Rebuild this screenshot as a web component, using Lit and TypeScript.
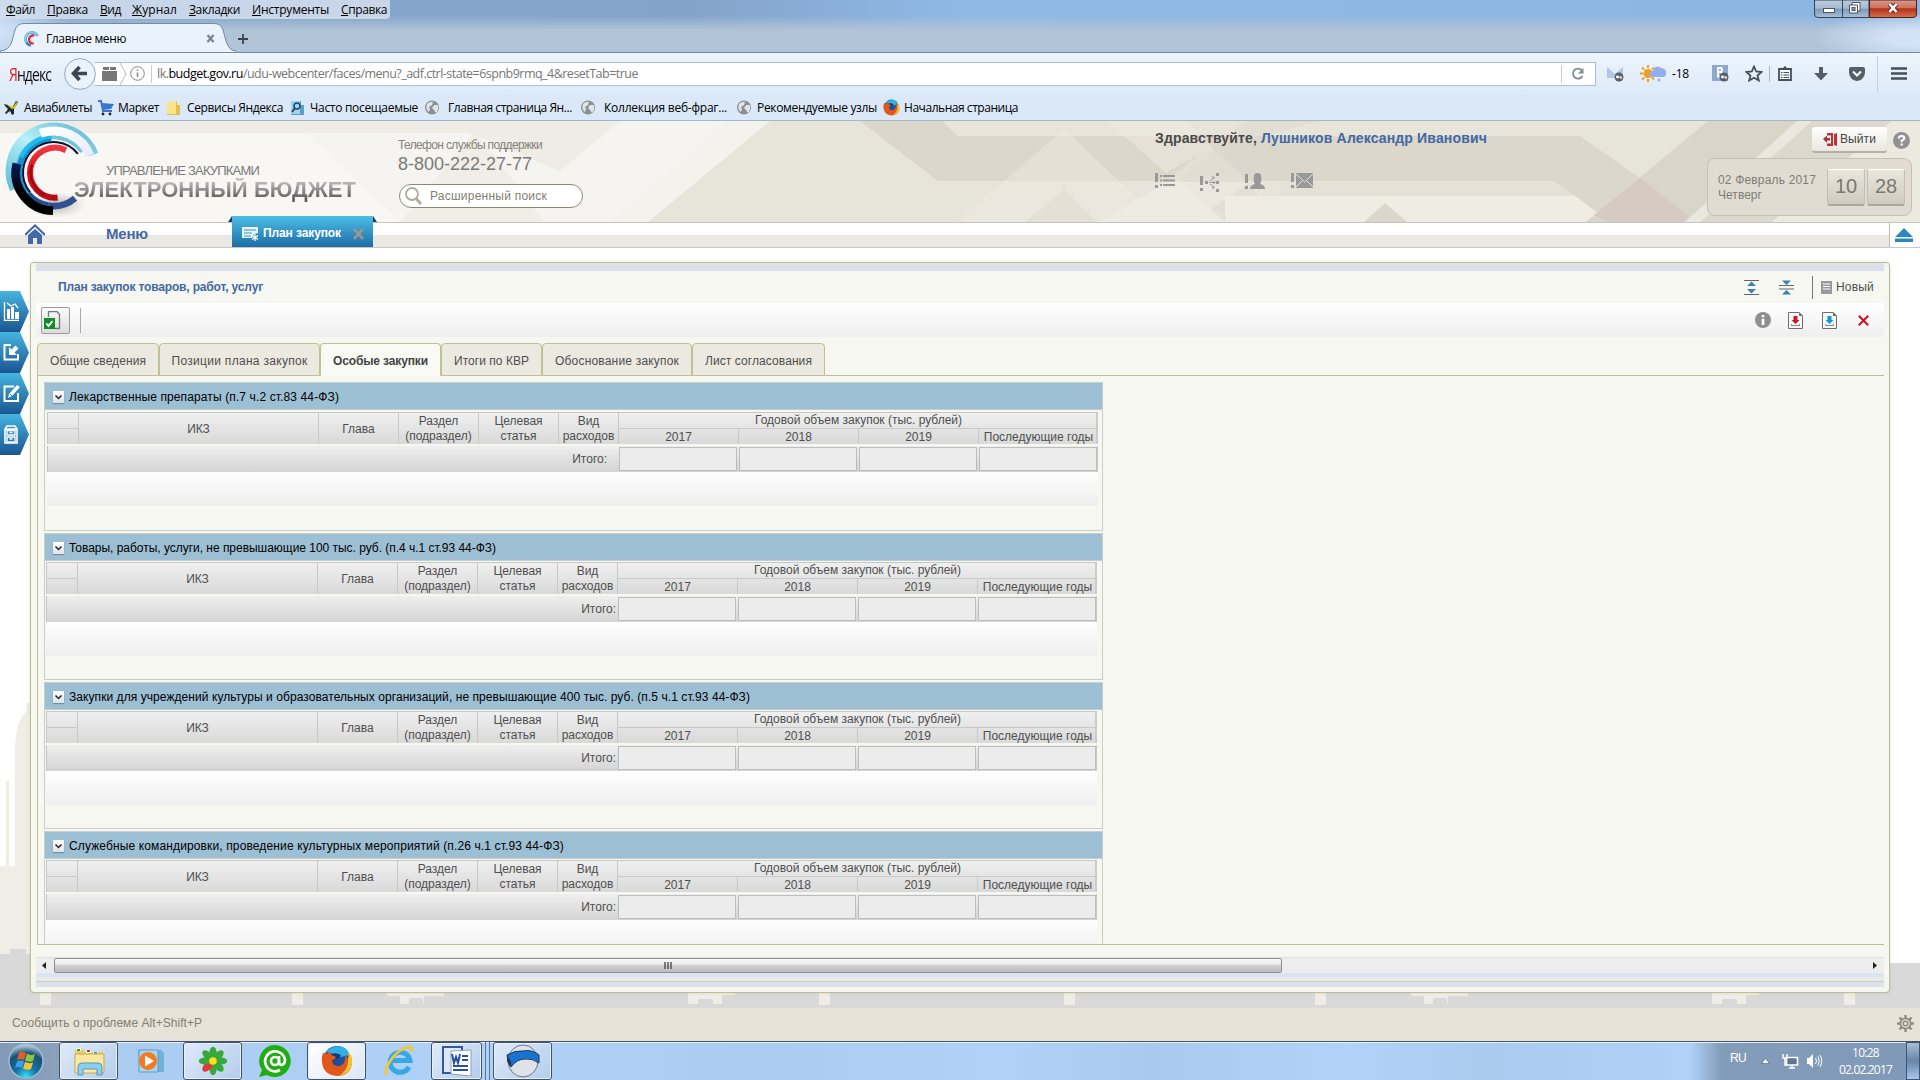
import { LitElement, html, svg, css } from "lit";
import { customElement, property } from "lit/decorators.js";

/** A text run that is tracked in or out so that it fills a set width. */
@customElement("fit-text")
class FitText extends LitElement {
  @property({ type: Number }) w = 0;
  @property({ type: Number }) gap = 0;
  static styles = css`
    :host { display: inline-block; white-space: nowrap; flex: none; }
    span { display: inline-block; }
  `;
  render() {
    return html`<span><slot></slot></span>`;
  }
  firstUpdated() {
    const span = this.renderRoot.querySelector("span") as HTMLElement;
    const n = (this.textContent || "").trim().length;
    const natural = span.getBoundingClientRect().width;
    if (this.w && n) {
      span.style.letterSpacing = `${(this.w - natural) / n}px`;
      this.style.width = `${this.w}px`;
    }
    this.style.marginLeft = `${this.gap}px`;
  }
}

const icon = (w: number, h: number, gap: number, body: unknown, vb = `0 0 ${w} ${h}`) =>
  html`<svg class="ic" width=${w} height=${h} viewBox=${vb} preserveAspectRatio="none" style="margin-left:${gap}px">${body}</svg>`;
const t = (text: unknown, w: number, gap = 0, cls = "") =>
  html`<fit-text class=${cls} .w=${w} .gap=${gap}>${text}</fit-text>`;

const arc = (cx: number, cy: number, r: number, a0: number, a1: number) => {
  const p = (a: number) => `${cx + r * Math.cos((a * Math.PI) / 180)} ${cy + r * Math.sin((a * Math.PI) / 180)}`;
  return `M${p(a0)}A${r} ${r} 0 ${a1 - a0 > 180 ? 1 : 0} 1 ${p(a1)}`;
};

const logo = svg`
  <defs>
    <linearGradient id="l1" x1="0" y1="1" x2="1" y2="0"><stop offset="0" stop-color="#62bfd8"/><stop offset=".5" stop-color="#b4f1fa"/><stop offset="1" stop-color="#5fb4d4"/></linearGradient>
    <linearGradient id="l2" x1="0" y1="0" x2="0" y2="1"><stop offset="0" stop-color="#0a1d5c"/><stop offset=".6" stop-color="#000"/></linearGradient>
    <linearGradient id="l3" x1="0" y1="0" x2="1" y2="1"><stop offset="0" stop-color="#fff"/><stop offset="1" stop-color="#e8ecfa"/></linearGradient>
    <linearGradient id="l4" x1="0" y1="0" x2="0" y2="1"><stop offset="0" stop-color="#f03844"/><stop offset=".5" stop-color="#e00c12"/><stop offset="1" stop-color="#b40c1a"/></linearGradient>
    <radialGradient id="l5"><stop offset="0" stop-color="#777" stop-opacity=".55"/><stop offset="1" stop-color="#999" stop-opacity="0"/></radialGradient>
  </defs>
  <ellipse cx="165" cy="255" rx="90" ry="38" fill="url(#l5)"/>
  <g fill="none">
    <path d=${arc(158, 152, 129, 155, 338)} stroke="url(#l1)" stroke-width="30"/>
    <path d=${arc(158, 157, 108, 150, 324)} stroke="#74c4e0" stroke-width="18"/>
    <path d=${arc(158, 158, 104, 130, 266)} stroke="#1592cc" stroke-width="18"/>
    <path d=${arc(158, 158, 108, 205, 266)} stroke="#18bdf2" stroke-width="12"/>
    <path d=${arc(158, 158, 92, 140, 322)} stroke="#0b1036" stroke-width="6"/>
    <path d=${arc(158, 150, 117, 250, 338)} stroke="url(#l3)" stroke-width="27"/>
    <path d=${arc(158, 158, 100, 50, 100)} stroke="#34518f" stroke-width="20"/>
    <path d=${arc(158, 158, 97, 100, 140)} stroke="#1d4f8c" stroke-width="14"/>
    <path d=${arc(158, 158, 114, 91, 194)} stroke="url(#l2)" stroke-width="26"/>
    <path d=${arc(162, 158, 75, 84, 296)} stroke="url(#l4)" stroke-width="18"/>
    <path d=${arc(162, 158, 73, 115, 200)} stroke="#8e0712" stroke-width="5"/>
  </g>`;

const headerArt = html`<svg class="art" width="1920" height="101" viewBox="0 0 1920 101">
  <rect width="1920" height="101" fill="#e7e4d9"/>
  <path d="M0 0H770L648 101H0Z" fill="#f3f2ed"/>
  <path d="M0 0H725L610 101H0Z" fill="#f5f4f0"/>
  <path d="M0 0H620L560 50L470 12H0Z" fill="#ebe8df" opacity=".7"/>
  <path d="M0 12H305L400 101H0Z" fill="#f8f7f4"/>
  <path d="M475 10L400 101H545Z" fill="#eeebe3" opacity=".7"/>
  <path d="M860 0H942L958 15H1580L1640 57L1690 101H1610L1553 60H938Z" fill="#dbd7cb"/>
  <path d="M957 101L1064 8L1140 80L1210 25L1290 101Z" fill="#efece4" opacity=".45"/>
  <path d="M1025 101L1064 69L1097 101Z" fill="#e4e0d5"/>
  <path d="M1107 0H1187L1212 26L1166 52Z" fill="#efece4" opacity=".5"/>
  <path d="M1245 0L1180 60L1225 101H1280L1220 26L1320 0Z" fill="#dfdbd0" opacity=".6"/>
  <path d="M1166 61H1250L1210 89L1225 101H1100Z" fill="#f1efe8" opacity=".5"/>
  <path d="M1280 61H1553L1575 75H1280Z" fill="#e4e1d6"/>
  <path d="M1225 75H1575L1610 101H1225Z" fill="#efece4"/>
  <path d="M1364 101L1385 82L1407 101Z" fill="#dbd7cb"/>
  <path d="M1708 0H1797L1690 96L1680 101H1586Z" fill="#d9d5c9"/>
  <path d="M1640 57L1690 96L1682 101H1609L1594 94Z" fill="#d5cbc1"/>
  <path d="M1797 0H1812L1700 101H1686Z" fill="#eae7de"/>
  <path d="M1812 0H1892L1772 101H1700Z" fill="#dcd8cd"/>
  <path d="M1892 0H1920V101H1772Z" fill="#ece9e0"/>
</svg>`;

const skyline = html`<svg class="art" width="1920" height="760" viewBox="0 0 1920 760">
  <path d="M0 618H6V533H9V618H15V500Q16 472 26 464L27 455H30V760H0Z" fill="#f0ede6"/>
  <path d="M0 706H10V701H26V706H40V745H1880V715H1920V760H0Z" fill="#d9d9d9"/>
  <g fill="#f0ede6">
    ${[40, 292, 819, 1064, 1315, 1844].map((x) => svg`<rect x=${x} y="745" width="11" height="12"/>`)}
    <path d="M387 745H444V748H424V755H423V750H409V756H400V748H387Z"/>
    <path d="M1411 745H1468V748H1448V755H1447V750H1433V756H1424V748H1411Z"/>
    <path d="M688 745H735V747H722V756H713V751H698V756H688Z"/>
    <path d="M1712 745H1759V747H1746V756H1737V751H1722V756H1712Z"/>
  </g>
</svg>`;

const globe = svg`<circle cx="7" cy="7.5" r="7" fill="#8b8f92"/><path d="M2 4Q5 1 8 2L7 5L4 7L5 9L4 12Q0 9 2 4ZM9 5L13 5Q14 9 11 13L9 10L7 8Z" fill="#dfe5e9"/>`;
const firefox = (s: number) => html`<svg class="ic" width=${s} height=${s} viewBox="0 0 32 32">
  <circle cx="16" cy="14.5" r="13.5" fill="#1d4f9c"/><path d="M5 7Q12 -1 22 2Q28 5 28 10L20 12L12 9Z" fill="#2fb0e6"/>
  <path d="M10 9Q15 7 20 10L17 14L12 15Z" fill="#163a78"/>
  <path d="M2 8Q4 8 6 9Q8 7 10 7Q9 10 13 11Q16 12 14 14L11 15Q11 20 16 21Q20 22 23 18Q25 14 24 10Q27 12 27 15Q28 11 27 7Q31 11 31 18Q29 31 16 31Q2 30 1 17Q0 12 2 8Z" fill="#e2571a"/>
  <path d="M27 6Q32 12 31 18Q29 29 18 31Q27 25 27 16Q28 11 27 6Z" fill="#f8c32e"/></svg>`;

const menus = [["Ф", "айл", 29, 6], ["П", "равка", 41, 12], ["В", "ид", 21, 12], ["Ж", "урнал", 45, 11], ["З", "акладки", 51, 12], ["И", "нструменты", 77, 12], ["С", "правка", 46, 12]] as const;

const bookmarks = () => html`
  ${icon(15, 16, 4, svg`<path d="M0 4L4 5L8 8L12 1L14 2L10 9L10 14L8 15L6 11L2 14L1 13L4 9L1 6Z" fill="#222a30"/><path d="M2 4L9 7L14 0L11 8L8 9Z" fill="#e7c91c"/>`)}${t("Авиабилеты", 68, 5)}
  ${icon(17, 16, 6, svg`<path d="M0 1H3L5 11H14" stroke="#3f74cc" stroke-width="2" fill="none"/><path d="M4 3L16 4L13 9L5 10Z" fill="#3f74cc"/><circle cx="5" cy="14" r="1.4" fill="#222"/><circle cx="12" cy="14" r="1.4" fill="#222"/>`)}${t("Маркет", 41, 3)}
  ${icon(15, 16, 7, svg`<path d="M1 1H11V5H14V15H1Z" fill="#e2bf4c"/><path d="M1 1H10V14H1Z" fill="#f8e48c"/>`)}${t("Сервисы Яндекса", 96, 6)}
  ${icon(15, 16, 7, svg`<path d="M1 1H11V5H14V15H1Z" fill="#5b9fc8"/><path d="M1 1H10V14H1Z" fill="#9fd2ec"/><circle cx="7" cy="6" r="3" fill="none" stroke="#246" stroke-width="1.5"/><path d="M5 8L2 12" stroke="#246" stroke-width="2"/>`)}${t("Часто посещаемые", 108, 5)}
  ${icon(14, 15, 7, globe)}${t("Главная страница Ян...", 124, 9)}
  ${icon(14, 15, 9, globe)}${t("Коллекция веб-фраг...", 123, 9)}
  ${icon(14, 15, 10, globe)}${t("Рекомендуемые узлы", 120, 6)}
  <span class="ffb">${firefox(17)}</span>${t("Начальная страница", 114, 4)}`;

const key = svg`<circle cx="12" cy="12" r="4.5" fill="#5a6066"/><path d="M9 12H15M14 12V14" stroke="#fff" stroke-width="1.2"/><circle cx="10.5" cy="12" r="1.4" fill="#fff"/>`;
const eighths = [0, 45, 90, 135, 180, 225, 270, 315];

@customElement("procurement-table")
class ProcurementTable extends LitElement {
  @property() heading = "";
  @property({ type: Number }) hw = 0;
  @property({ type: Boolean, reflect: true }) first = false;
  static styles = css`
    :host { display: block; box-sizing: border-box; width: 1059px; border: 1px solid #cbcdc8; height: 147px; flex: none; font: 12px "Liberation Sans", Arial, sans-serif; color: #4f4f4f; }
    :host([first]) { height: 149px; }
    .bar { background: #9dbfd3; border-bottom: 1px solid #c4cccd; display: flex; align-items: center; color: #000; padding: 1px 0 0 8px; gap: 5px; box-sizing: border-box; height: 27px; }
    .chk { width: 11px; height: 12px; background: linear-gradient(#fff, #dfe3ea); display: block; box-shadow: 0 1px 1px #6e8fa8; }
    .body { padding: 1px 0 0 1px; width: 1052px; }
    :host([first]) .body { padding: 2px 0 0 2px; }
    .head { display: grid; grid-template-columns: 31px 240px 80px 80px 80px 60px 120px 120px 120px 120px; grid-template-rows: 16px 16px; grid-auto-flow: column; background: linear-gradient(#f0f0f0, #d9d9d9); border-right: 2px solid #cbcbcb; width: 1051px; box-sizing: border-box; }
    .head > div { border-top: 1px solid #c8c8c8; border-left: 1px solid #c8c8c8; display: flex; align-items: center; justify-content: center; text-align: center; line-height: 15px; white-space: pre; min-width: 0; }
    .head > .tall { grid-row: 1 / 3; padding-top: 1px; }
    .head > .wide { grid-row: 1; grid-column: 7 / 11; }
    .head > .n { grid-row: 2; padding-top: 1px; }
    .total { margin-top: 2px; height: 26px; width: 1051px; box-sizing: border-box; background: linear-gradient(#efefef, #d4d4d4); border-left: 1px solid #c4c4c4; border-right: 1px solid #c8c8c8; display: flex; align-items: center; justify-content: flex-end; gap: 2px; }
    .total span { margin-top: -1px; }
    :host([first]) .total span { margin-right: 10px; }
    .total i { width: 118px; height: 24px; box-sizing: border-box; border: 1px solid #bdbdbd; background: #ececec; }
    .blank { height: 34px; width: 1051px; background: linear-gradient(#fff, #eeeeee); }
  `;
  render() {
    return html`
      <div class="bar">
        <svg class="chk" viewBox="0 0 11 12"><path d="M2.5 4.5L5.5 7.5L8.5 4.5" fill="none" stroke="#222" stroke-width="1.5"/></svg>
        ${t(this.heading, this.hw)}
      </div>
      <div class="body">
        <div class="head">
          <div></div><div></div>
          ${["ИКЗ", "Глава", "Раздел\n(подраздел)", "Целевая\nстатья", "Вид\nрасходов"].map((c) => html`<div class="tall">${c}</div>`)}
          <div class="wide">Годовой объем закупок (тыс. рублей)</div>
          ${["2017", "2018", "2019", "Последующие годы"].map((c) => html`<div class="n">${c}</div>`)}
        </div>
        <div class="total"><span>Итого:</span><i></i><i></i><i></i><i></i></div>
        <div class="blank"></div>
      </div>`;
  }
}

const sections: [string, number][] = [
  ["Лекарственные препараты (п.7 ч.2 ст.83 44-ФЗ)", 270],
  ["Товары, работы, услуги, не превышающие 100 тыс. руб. (п.4 ч.1 ст.93 44-ФЗ)", 427],
  ["Закупки для учреждений культуры и образовательных организаций, не превышающие 400 тыс. руб. (п.5 ч.1 ст.93 44-ФЗ)", 681],
  ["Служебные командировки, проведение культурных мероприятий (п.26 ч.1 ст.93 44-ФЗ)", 495],
];
const tabs: [string, number, number][] = [["Общие сведения", 122, 96], ["Позиции плана закупок", 161, 136], ["Особые закупки", 121, 95], ["Итоги по КВР", 101, 75], ["Обоснование закупок", 150, 124], ["Лист согласования", 133, 107]];

const sideIcons = [
  svg`<path d="M1.5 0V18.5H16M4 1L8 4L12 2L15 6" fill="none" stroke="#fff" stroke-width="1.3"/><path d="M4 7H7V17H4ZM8 5H11V17H8ZM12 10H16V17H12Z" fill="#fff"/>`,
  svg`<path d="M8 2H1.5V16.5H15V11" fill="none" stroke="#fff" stroke-width="2"/><path d="M6 4V12H14L11.500 9.500L15.500 5.500L12.500 2.500L8.500 6.500Z" fill="#fff"/>`,
  svg`<path d="M11 2.5H1.5V17H15V9" fill="none" stroke="#fff" stroke-width="2"/><path d="M5 14L6 10L14 1L17 3L9 12Z" fill="#fff"/><path d="M7 10L9 12" stroke="#2a80b4"/>`,
  svg`<path d="M2 4L4 1H12L14 4V18H2Z" fill="none" stroke="#fff" stroke-width="1.6"/><path d="M2 4H14M4 5.5H12V10H4ZM4 12H12V17H4Z" fill="none" stroke="#fff" stroke-width="1.4"/><path d="M6.5 7.500H9.500M6.500 14H9.500" stroke="#fff" stroke-width="1.500"/>`,
];

const doc = (c: string) => svg`<path d="M.5.5H11L14.500 4V16.500H.5Z" fill="#f7f7f7" stroke="#6e6e6e"/><path d="M11 0V4H15Z" fill="#6e6e6e"/><path d="M5.500 4H9.500V8H11.500L7.500 12L3.500 8H5.500Z" fill=${c}/><path d="M3.500 12V13.500H11.500V12" fill="none" stroke="#888"/>`;

@customElement("app-root")
class AppRoot extends LitElement {
  static styles = css`
    :host { display: flex; flex-direction: column; width: 1920px; height: 1080px; overflow: hidden; position: relative; background: #fff; font: 12px "Liberation Sans", Arial, sans-serif; color: #4f4f4f; }
    * { box-sizing: border-box; }
    .ic { flex: none; display: block; }
    .art { position: absolute; left: 0; top: 0; z-index: -1; }
    .row { display: flex; align-items: center; }
    .seg { font-family: "Open Sans", "Noto Sans", sans-serif; color: #000; }
    .title { height: 53px; flex: none; display: flex; flex-direction: column; background: radial-gradient(ellipse 110px 26px at 1920px 38px, #d3e2f6 30%, transparent), radial-gradient(ellipse 70px 60px at 0 30px, #d0e2f8, transparent), linear-gradient(#b0c3d800 30%, #b0c3d6 58%, #b0c3d8), linear-gradient(90deg, #86a8d0, #84a3c9 36%, #8fb9e6 50%, #8cb6e2); border-bottom: 1px solid #75899f; position: relative; }
    .menu { width: 390px; height: 20px; background: #d2deecdd; border-radius: 0 0 4px 0; }
    u { text-underline-offset: 1px; }
    .wbtns { position: absolute; right: 3px; top: 0; }
    .tabrow { height: 33px; padding-top: 4px; align-items: flex-start; position: relative; }
    .btab { width: 236px; height: 29px; position: relative; z-index: 0; padding-top: 2px; }
    .toolbar { height: 42px; flex: none; background: linear-gradient(#eef5fc, #dceaf8); padding-bottom: 1px; }
    .ya { font-size: 14px; color: #111; transform: scaleY(1.35); } .ya b { color: #e5171b; font-weight: 400; }
    .url { height: 24px; flex: none; width: 1501px; margin-left: -1px; background: #fff; border: 1px solid #a9bfd4; border-left: 0; display: flex; align-items: center; font-size: 12.5px; color: #777; }
    .url b { color: #000; font-weight: 400; }
    .back { z-index: 1; }
    .bm { height: 26px; flex: none; background: #dae8f7; border-bottom: 1px solid #9fb7d2; }
    .ffb { margin-left: 6px; }
    .header { height: 101px; flex: none; position: relative; z-index: 0; display: flex; }
    .brand { width: 398px; display: flex; padding-left: 1px; }
    .words { padding-top: 42px; margin-left: -1px; }
    .w1 { font-size: 13px; color: #7a7a7a; display: block; }
    .w2 { font-size: 22px; font-weight: bold; line-height: 24px; margin: 0 0 0 -32px; display: block; background: linear-gradient(#b5b5b5 20%, #8c8c8c 50%, #5e5e5e 85%); -webkit-background-clip: text; background-clip: text; color: transparent; }
    .phone { width: 757px; padding-top: 17px; color: #85837c; }
    .num { font-size: 18px; line-height: 22px; color: #7b7b78; display: block; margin-top: 1px; }
    .search { width: 184px; height: 24px; border: 1px solid #8d8672; border-radius: 12px; background: #fff; margin: 9px 0 0 1px; color: #85806f; }
    .hello { width: 552px; padding-top: 9px; }
    .hello b { font-size: 14px; color: #4a4a4a; } .hello .nm { color: #4268a5; }
    .hrow { margin-top: 27px; color: #949494; align-items: flex-start; }
    .right { padding-top: 6px; width: 213px; }
    .exit { width: 75px; height: 26px; background: linear-gradient(#fff, #e9e7e2); border-bottom: 2px solid #b3b0a8; border-radius: 3px; margin-left: 105px; color: #444; }
    .date { width: 205px; height: 58px; border: 1px solid #c5c1b2; border-radius: 8px; background: #e0dcd2; margin-top: 5px; color: #7f7c74; line-height: 15px; }
    .dt { width: 109px; padding: 2px 0 0 10px; }
    .sq { width: 38px; height: 37px; background: linear-gradient(#e9e6df, #cfcbbf); border: 1px solid #c2beb2; border-top: 1px solid #fff; border-bottom: 2px solid #aba89c; border-radius: 3px; display: flex; align-items: center; justify-content: center; font-size: 20px; margin-left: 2px; color: #7b7870; padding-bottom: 1px; }
    .sq:first-of-type { margin-left: 10px; }
    .nav { height: 26px; flex: none; background: linear-gradient(#c5c4bf 1px, #fff 1px, #fff 13px, #e9e8e3 13px, #e9e8e3 25px, #c9c8c2 25px); align-items: flex-start; position: relative; z-index: 1; }
    .nav .ic { margin-top: 2px; }
    .nav .m { font-size: 15px; font-weight: bold; color: #4268a5; margin-top: 3px; }
    .ntab { width: 141px; height: 31px; margin: -6px 0 0 84px; background: linear-gradient(#4cbfe7, #1d6ca6); color: #fff; font-weight: bold; position: relative; padding-top: 2px; }
    .ntab::before, .ntab::after { content: ""; position: absolute; top: 0; border-style: solid; }
    .ntab::before { left: -4px; border-width: 0 0 6px 4px; border-color: transparent transparent #1b3a6b transparent; }
    .ntab::after { right: -4px; border-width: 6px 0 0 4px; border-color: transparent transparent transparent #1b3a6b; }
    .ej { height: 24px; width: 31px; margin-left: 1516px; border-left: 1px solid #c3c29f; background: #fff; margin-top: 1px; padding: 3px 0 0 5px; }
    .main { height: 759px; flex: none; display: flex; position: relative; z-index: 0; }
    .side { width: 30px; padding-top: 43px; flex: none; position: relative; }
    .st { width: 29px; height: 41px; background: linear-gradient(#45b5df, #1b5591); clip-path: polygon(0 0, 20px 0, 29px 50%, 20px 100%, 0 100%); display: flex; align-items: center; padding-left: 3px; }
    .panel { width: 1860px; height: 731px; margin-top: 14px; border: 1px solid #bcc08f; border-radius: 4px; background: #f6f7f0; box-shadow: 0 0 3px #9995; padding: 0 5px; }
    .band { height: 8px; background: #dde2ea; }
    .ttl { height: 32px; color: #4268a5; font-weight: bold; }
    .ttl .nw { color: #4f4f4f; font-weight: 400; }
    .tool { height: 34px; background: linear-gradient(#fff, #eee); }
    .ok { width: 29px; height: 27px; border: 1px solid #9a9a9a; border-radius: 2px; background: linear-gradient(#fafafa, #dcdcdc); margin-left: 5px; display: flex; align-items: center; }
    .tabs { margin: 6px 0 0 1px; height: 33px; display: flex; border-bottom: 1px solid #bcc08f; }
    .tab { height: 33px; border: 1px solid #bcc294; border-radius: 4px 4px 0 0; background: #ece9e1; display: flex; align-items: center; justify-content: center; padding-top: 3px; }
    .tab.on { background: #f9faf4; border-bottom-color: #f9faf4; font-weight: bold; color: #444; }
    .scroll { margin-left: 1px; height: 569px; border-left: 1px solid #bcc08f; border-bottom: 1px solid #bcc08f; padding: 6px 0 0 6px; overflow: hidden; display: flex; flex-direction: column; gap: 2px; }
    .sb { margin-top: 12px; height: 16px; background: linear-gradient(#e2e2e2 1px, #ededed 1px); display: flex; align-items: center; }
    .thumb { width: 1228px; height: 15px; border: 1px solid #8f8f8f; border-radius: 2px; background: linear-gradient(#f7f7f7, #e6e6e6 45%, #cfcfcf 50%, #bdbdbd); margin-left: 8px; display: flex; align-items: center; justify-content: center; }
    .s1 { height: 4px; background: #d9e6f0; } .s2 { height: 5px; background: #eaeae8; border-bottom: 1px solid #cfd0c4; } .s3 { height: 5px; background: #dde2ea; }
    .foot { height: 34px; flex: none; border-top: 1px solid #b9b7ad; background: #e7e3d8; color: #857f70; padding-bottom: 3px; }
    .task { height: 39px; flex: none; border-top: 1px solid #44566b; box-shadow: inset 0 1px #e4f0fc; background: linear-gradient(90deg, #829ab8 0, #8aa0bb 59px, #a9cbf0 60px, #b0d2f8 500px, #aaccf0 760px, #b0d2f8 1000px, #a9caee 1150px, #b1d3f9 1350px, #a9cbee 1480px, #b0d1f8 1690px, #829cb9 1722px, #8099b6 1920px); color: #fff; }
    .tb { width: 59px; height: 38px; border: 1px solid #3f5370; border-radius: 3px; background: linear-gradient(135deg, #dfeaf8, #b4cdec); box-shadow: inset 0 0 0 1px #e9f2fc; display: flex; align-items: center; justify-content: center; flex: none; }
    .tb.start { margin-left: 15px; } .tb.word { width: 51px; } .tb.after { margin-left: 3px; }
    .tb.p { background: none; border-color: transparent; box-shadow: none; width: 65px; }
    .tb.hot { background: linear-gradient(135deg, #fff, #dbe7f6); }
    .ru { margin-top: -6px; }
    .clock { line-height: 17px; margin-left: 16px; width: 53px; text-align: center; flex: none; }
    .clock.seg { color: #fff; }
    .stack { width: 4px; height: 38px; border-right: 1px solid #5b7596; flex: none; }
    .desk { width: 14px; height: 38px; margin-left: auto; background: linear-gradient(#a9bdd6, #6685a8 50%, #a6c8ec); border: 1px solid #40546e; flex: none; }
  `;

  render() {
    return html`
      <div class="title seg">
        <div class="row menu">${menus.map(([a, b, w, g]) => t(html`<u>${a}</u>${b}`, w, g))}</div>
        <svg class="wbtns" width="103" height="18" viewBox="0 0 103 18">
          <defs><linearGradient id="wg" x1="0" y1="0" x2="0" y2="1"><stop offset="0" stop-color="#bccbde"/><stop offset=".48" stop-color="#a6b9d0"/><stop offset=".5" stop-color="#7f97b5"/><stop offset="1" stop-color="#a9bfd8"/></linearGradient>
          <linearGradient id="wr" x1="0" y1="0" x2="0" y2="1"><stop offset="0" stop-color="#d99a8e"/><stop offset=".45" stop-color="#cf6f5c"/><stop offset=".5" stop-color="#b4301a"/><stop offset="1" stop-color="#d8714c"/></linearGradient></defs>
          <path d="M.5 0V14Q.5 17.500 4 17.500H55V0Z" fill="url(#wg)" stroke="#34445a"/><path d="M28.500 0V17" stroke="#34445a"/>
          <path d="M55.500 0V17.500H99Q102.500 17.500 102.500 14V0Z" fill="url(#wr)" stroke="#4a2020"/>
          <rect x="9.500" y="8.500" width="11" height="4" fill="#fff" stroke="#4a5568"/>
          <path d="M38 2.500H46V11H38Z" fill="#fff" stroke="#4a5568"/><path d="M35.500 5H43.500V13H35.500Z" fill="#fff" stroke="#4a5568"/><rect x="38" y="7.500" width="3" height="3" fill="#7f97b5" stroke="#4a5568"/>
          <path d="M75.500 4L82.500 12M82.500 4L75.500 12" stroke="#5a3030" stroke-width="4.500"/><path d="M75.500 4L82.500 12M82.500 4L75.500 12" stroke="#fff" stroke-width="2.600"/>
        </svg>
        <div class="row tabrow">
          <div class="row btab">
            <svg class="art" width="236" height="29" viewBox="0 0 236 29"><path d="M0 29V28Q9 28 12 18L15 7Q17 .5 24 .5H214Q221 .5 223 7L226 18Q229 28 236 28V29Z" fill="#eaf3fc" stroke="#75899f"/><path d="M1 28.700H235" stroke="#eaf3fc" stroke-width="1.500"/></svg>
            ${icon(16, 16, 24, svg`<g fill="none"><path d=${arc(8, 8, 6.5, 100, 330)} stroke="#3b7fc4" stroke-width="2.500"/><path d=${arc(8, 8, 6.800, 150, 330)} stroke="#7fd0ea" stroke-width="2"/><path d=${arc(9, 8.500, 4, 80, 290)} stroke="#e02030" stroke-width="2.200"/></g>`)}
            ${t("Главное меню", 80, 6)}
            ${icon(9, 9, 80, svg`<path d="M1.500 1L7.500 8M7.500 1L1.500 8" stroke="#7b828a" stroke-width="2.200"/>`)}
          </div>
          <div class="row btab">${icon(10, 10, 2, svg`<path d="M5 0V10M0 5H10" stroke="#39434d" stroke-width="1.800"/>`)}</div>
        </div>
      </div>

      <div class="row toolbar seg">
        ${t(html`<b>Я</b>ндекс`, 42, 9, "ya")}
        <span class="back">${icon(32, 32, 13, svg`<circle cx="16" cy="16" r="15.400" fill="#eaf2fb" stroke="#93a9c2"/><path d="M15.500 9L9.500 15.500L15.500 22M10 15.500H23" fill="none" stroke="#3e4750" stroke-width="3.600"/>`)}</span>
        <div class="url">
          ${icon(15, 14, 7, svg`<path d="M0 4H15V14H0ZM1 0H7V3H1ZM8 0H14V3H8Z" fill="#777"/>`)}
          ${icon(8, 22, 2, svg`<path d="M1 0L7 11L1 22" fill="none" stroke="#bbb"/>`)}
          ${icon(15, 15, 3, svg`<circle cx="7.500" cy="7.500" r="6.800" fill="none" stroke="#888"/><path d="M7.500 6.500V11M7.500 3.500V5" stroke="#888" stroke-width="1.500"/>`)}
          ${icon(1, 18, 6, svg`<rect width="1" height="18" fill="#ccc"/>`)}
          ${t(html`lk.<b>budget.gov.ru</b>/udu-webcenter/faces/menu?_adf.ctrl-state=6spnb9rmq_4&amp;resetTab=true`, 481, 5)}
          ${icon(1, 18, 923, svg`<rect width="1" height="18" fill="#ccc"/>`)}
          ${icon(12, 12, 10, svg`<path d="M10 2.500A5 5 0 1 0 10.500 8" fill="none" stroke="#7f8b97" stroke-width="1.800"/><path d="M11.500 0V5.500H6Z" fill="#7f8b97"/>`)}
        </div>
        ${icon(17, 17, 11, svg`<path d="M0 2H16V13H0Z" fill="#b3c6e8"/><path d="M0 2L8 9L16 2" fill="#e6eefa"/>${key}`)}
        ${icon(27, 17, 16, svg`<g stroke="#f2a01c" stroke-width="2"><path d="M8 0V17M0 8.500H16M2 2.500L14 14.500M14 2.500L2 14.500" stroke-dasharray="3 11"/></g><circle cx="8" cy="8.500" r="4.500" fill="#f2a01c"/><path d="M12 12Q8 11 10 7Q12 6 13 6Q16 -1 21 3Q27 4 26 9Q26 12 23 12Z" fill="#92adf0"/><circle cx="19" cy="15" r="1.500" fill="#92adf0"/>`)}
        ${t("-18", 17, 5)}
        ${icon(17, 17, 23, svg`<rect width="16" height="16" fill="#8ea8cb"/><path d="M6 3H9.500Q11 5 9 7Q12 9 9 11.500H6ZM6 7H9" fill="none" stroke="#fff" stroke-width="1.800"/>${key}`)}
        ${icon(18, 17, 16, svg`<path d="M9 1.500L11.200 6.500L16.500 7L12.500 10.500L13.800 15.500L9 12.800L4.200 15.500L5.500 10.500L1.500 7L6.800 6.500Z" fill="none" stroke="#454f59" stroke-width="1.800"/>`)}
        ${icon(1, 16, 6, svg`<rect width="1" height="16" fill="#aab7c4"/>`)}
        ${icon(14, 15, 8, svg`<path d="M1 3H13V14H1Z" fill="#f2f7fc" stroke="#454f59" stroke-width="1.800"/><path d="M4 3L7 0L10 3Z" fill="#454f59"/><path d="M3 6.500H4.500M5.500 6.500H11M3 9H4.500M5.500 9H11M3 11.500H4.500M5.500 11.500H11" stroke="#454f59" stroke-width="1.200"/>`)}
        ${icon(14, 14, 22, svg`<path d="M5 0H9V6H14L7 13.500L0 6H5Z" fill="#555f6a"/>`)}
        ${icon(16, 14, 21, svg`<path d="M0 2Q0 0 2 0H14Q16 0 16 2V6Q15 13 8 14Q1 13 0 6Z" fill="#555f6a"/><path d="M4 4.500L8 8.500L12 4.500" fill="none" stroke="#fff" stroke-width="2"/>`)}
        ${icon(1, 36, 12, svg`<rect width="1" height="36" fill="#c4d2e0"/>`)}
        ${icon(16, 13, 13, svg`<path d="M0 1.500H16M0 6.500H16M0 11.500H16" stroke="#454f59" stroke-width="2.600"/>`)}
      </div>
      <div class="row bm seg">${bookmarks()}</div>

      <div class="header">
        ${headerArt}
        <div class="brand">
          <svg class="ic" width="106" height="99" viewBox="0 3 318 297">${logo}</svg>
          <div class="words">
            <div class="w1">${t("УПРАВЛЕНИЕ ЗАКУПКАМИ", 153)}</div>
            <div class="w2">${t("ЭЛЕКТРОННЫЙ БЮДЖЕТ", 282)}</div>
          </div>
        </div>
        <div class="phone">
          ${t("Телефон службы поддержки", 144)}
          <div class="num">${t("8-800-222-27-77", 134)}</div>
          <div class="row search">
            ${icon(20, 18, 4, svg`<circle cx="8" cy="7" r="6" fill="none" stroke="#b3aaa0" stroke-width="1.800"/><path d="M12 11.500L17 17" stroke="#b3a89c" stroke-width="2.800"/>`)}
            ${t("Расширенный поиск", 117, 6)}
          </div>
        </div>
        <div class="hello">
          <b>${t("Здравствуйте,", 102)}${t("Лушников Александр Иванович", 226, 4, "nm")}</b>
          <div class="row hrow">
            ${icon(20, 15, 0, svg`<path d="M0 0H3V9H0ZM0 12H3V15H0ZM5 2H7V4H5ZM8 2H20V4H8ZM5 6.500H7V8.500H5ZM8 6.500H20V8.500H8ZM5 11H7V13H5ZM8 11H20V13H8Z" fill="#999"/>`)}
            ${icon(20, 19, 25, svg`<path d="M0 3H3V12H0ZM0 15H3V18H0ZM16 0H19V3H16ZM5 8H8V11H5ZM16 8H19V11H16ZM16 16H19V19H16Z" fill="#999"/><path d="M9 9.500H15M10 8L14 4M10 11L14 15M12 4H14V6M12 15H14V13M13 7.500L15 9.500L13 11.500" fill="none" stroke="#999"/>`)}
            ${icon(20, 16, 25, svg`<path d="M0 1H3V10H0ZM0 13H3V16H0ZM5 16Q5 12 10 11Q8 8 9 3Q9 0 12.500 0Q16 0 16 3Q17 8 15 11Q20 12 20 16Z" fill="#999"/>`)}
            ${icon(23, 15, 26, svg`<path d="M0 0H3V9H0ZM0 12H3V15H0ZM5 0H22V15H5Z" fill="#999"/><path d="M5 1L13.500 9L22 1M5 14L11 8M22 14L16 8" fill="none" stroke="#e8e5dc"/>`)}
          </div>
        </div>
        <div class="right">
          <div class="row">
            <div class="row exit">
              ${icon(14, 13, 11, svg`<path d="M0 6L4 2.500V5H7V7.500H4V10Z" fill="#a83238"/><path d="M4 0H10V13H4V10.500H8V2.500H4ZM11 1L14 0V13L11 12Z" fill="#c0303a"/>`)}
              ${t("Выйти", 36, 3)}
            </div>
            ${icon(17, 17, 6, svg`<circle cx="8.500" cy="8.500" r="8.500" fill="#929292"/><path d="M5.800 6.500Q6 4 8.500 4Q11.300 4 11.300 6.200Q11 7.600 8.700 8.700V10.300M8.700 11.500V13.500" fill="none" stroke="#fff" stroke-width="2.200"/>`)}
          </div>
          <div class="row date">
            <div class="dt">${t("02 Февраль 2017", 98)}${t("Четверг", 44)}</div>
            <span style="width:8px"></span><div class="sq">10</div><div class="sq">28</div>
          </div>
        </div>
      </div>

      <div class="row nav">
        ${icon(20, 20, 25, svg`<path d="M0 11L10 1.500L20 11" fill="none" stroke="#4268a5" stroke-width="2"/><path d="M3 11L10 5L17 11V20H12V14H8V20H3Z" fill="#4268a5"/>`)}
        ${t("Меню", 42, 61, "m")}
        <div class="row ntab">
          ${icon(17, 15, 10, svg`<path d="M0 1H16V7L12 8L10 12H0Z" fill="#e9f6fd"/><path d="M2 4H14M2 7H10M2 10H9" stroke="#2f93c8"/><path d="M13 8V15M10 9.500L16 13.500M16 9.500L10 13.500" stroke="#fff" stroke-width="1.200"/>`)}
          ${t("План закупок", 78, 4)}
          ${icon(11, 12, 12, svg`<path d="M1 1L10 11M10 1L1 11" stroke="#a6968a" stroke-width="2.600"/>`)}
        </div>
        <div class="ej">${icon(18, 14, 0, svg`<path d="M9 0L18 9H0ZM0 10.500H18V14H0Z" fill="#2c86bf"/>`)}</div>
      </div>

      <div class="main">
        ${skyline}
        <div class="side">${sideIcons.map((s) => html`<div class="st">${icon(18, 19, 0, s)}</div>`)}</div>
        <div class="panel">
          <div class="band"></div>
          <div class="row ttl">
            ${t("План закупок товаров, работ, услуг", 205, 22)}
            ${icon(15, 15, 1481, svg`<path d="M0 .5H15M0 14.500H15" stroke="#666"/><path d="M7.500 1.500L12 6H3ZM7.500 13.500L12 9H3Z" fill="#3f80b8"/>`)}
            ${icon(15, 15, 20, svg`<path d="M0 5.500H15M0 9H15" stroke="#666"/><path d="M7.500 5L12 .5H3ZM7.500 10L12 14.500H3Z" fill="#3f80b8"/>`)}
            ${icon(1, 23, 18, svg`<rect width="1" height="23" fill="#777"/>`)}
            ${icon(11, 13, 8, svg`<rect width="11" height="13" fill="#999"/><path d="M2 3H9M2 5.500H9M2 8H9" stroke="#fff"/>`)}
            ${t("Новый", 38, 4, "nw")}
          </div>
          <div class="row tool">
            <div class="ok">${icon(17, 19, 2, svg`<path d="M4.500 6V.5H13L15.500 3.500V17.500H11" fill="none" stroke="#777" stroke-width="1.300"/><rect y="7" width="11" height="11" fill="#138a2c"/><path d="M2.500 12.500L4.500 15L8.500 10" fill="none" stroke="#fff" stroke-width="2"/>`)}</div>
            ${icon(1, 25, 10, svg`<rect width="1" height="25" fill="#aaa"/>`)}
            ${icon(16, 16, 1674, svg`<circle cx="8" cy="8" r="8" fill="#8f8f8f"/><path d="M8 6.800V13M8 3V5.300" stroke="#fff" stroke-width="2.600"/>`)}
            ${icon(15, 17, 17, doc("#cc1423"))}
            ${icon(15, 17, 19, doc("#0a9ad6"))}
            ${icon(11, 11, 21, svg`<path d="M.8.8L10.200 10.200M10.200.8L.8 10.200" stroke="#cc1020" stroke-width="2"/>`)}
          </div>
          <div class="tabs">${tabs.map(([s, w, tw], i) => html`<div class="tab ${i === 2 ? "on" : ""}" style="width:${w}px">${t(s, tw)}</div>`)}</div>
          <div class="scroll">
            ${sections.map(([s, w], i) => html`<procurement-table .heading=${s} .hw=${w} ?first=${i === 0}></procurement-table>`)}
          </div>
          <div class="sb">
            ${icon(4, 7, 6, svg`<path d="M4 0V7L0 3.500Z" fill="#222"/>`)}
            <div class="thumb">${icon(8, 7, 0, svg`<path d="M1 0V7M4 0V7M7 0V7" stroke="#555" stroke-width="1.500"/>`)}</div>
            ${icon(4, 7, 591, svg`<path d="M0 0V7L4 3.500Z" fill="#222"/>`)}
          </div>
          <div class="s1"></div><div class="s2"></div><div class="s3"></div>
        </div>
      </div>

      <div class="row foot">
        ${t("Сообщить о проблеме Alt+Shift+P", 190, 12)}
        ${icon(17, 17, 1695, svg`<g stroke="#8f8b82" fill="none"><circle cx="8.500" cy="8.500" r="5.200" stroke-width="1.800"/><circle cx="8.500" cy="8.500" r="2.300" stroke-width="1.500"/>${eighths.map((a) => svg`<path d="M8.500 0V3" stroke-width="2.400" transform="rotate(${a} 8.500 8.500)"/>`)}</g>`)}
      </div>

      <div class="row task">
        ${icon(36, 36, 8, svg`<defs><radialGradient id="orb" cy=".95" r=".9"><stop offset="0" stop-color="#2ee0ff"/><stop offset=".35" stop-color="#1273a8"/><stop offset=".75" stop-color="#1d4f74"/><stop offset="1" stop-color="#a8c6d8"/></radialGradient></defs><circle cx="18" cy="18" r="17" fill="url(#orb)" stroke="#9dbccd" stroke-width="1.500"/><path d="M11 10Q14 8 18 10L16 17Q13 15 9 17Z" fill="#ee5a24"/><path d="M19 10.500Q23 13 27 11L25 18Q21 19.500 17 17.500Z" fill="#8cc63e"/><path d="M9 18.500Q12 16.500 16 18.500L14 25Q11 23 7 25Z" fill="#3aa0e8"/><path d="M17 19Q21 21 25 19.500L23 26Q19 27.500 15 25.500Z" fill="#fcc62a"/>`)}
        <div class="tb start">${icon(32, 30, 0, svg`<path d="M2 3H10L12 6H30V27H2Z" fill="#eccb6c"/><path d="M3 2H8V5H3ZM13 4H18V7H13ZM20 6H25V9H20Z" fill="#fff"/><path d="M4 3H7V5H4Z" fill="#2a9d3a"/><path d="M14 4H17V6H14Z" fill="#c33"/><path d="M21 6H24V8H21Z" fill="#39c"/><path d="M2 8H31V27H2Z" fill="#fbe8a0" stroke="#c9a548"/><path d="M5 29V21Q5 17 9 17H25Q29 17 29 21V29H24V23H10V29Z" fill="#8fcdec" stroke="#4b9cc4"/>`)}</div>
        <div class="tb p">${icon(28, 28, 0, svg`<path d="M1 3H24L27 6V25H3Z" fill="#6fb1da"/><path d="M2 3H21V25H2Z" fill="#a9d5ef" stroke="#5c9bc6"/><circle cx="11" cy="14" r="9" fill="#f47a20"/><path d="M8 8.500L17 14L8 19.500Z" fill="#fff"/>`)}</div>
        <div class="tb">${icon(30, 30, 0, svg`${eighths.map((a) => svg`<ellipse cx="15" cy="7" rx="3.600" ry="6.200" fill=${a === 225 ? "#e8343c" : "#37a93c"} transform="rotate(${a} 15 15)"/>`)}<circle cx="15" cy="15" r="3.800" fill="#ffe11a"/>`)}</div>
        <div class="tb p">${icon(34, 34, 0, svg`<path d="M17 1A16 16 0 1 1 9 31L1 33L4 26A16 16 0 0 1 17 1Z" fill="#1fae12"/><circle cx="17" cy="17" r="4" fill="none" stroke="#fff" stroke-width="2.600"/><path d="M21 12V18Q21 21 24 21Q27 20 27 16A10 10 0 1 0 22 26" fill="none" stroke="#fff" stroke-width="2.600"/>`)}</div>
        <div class="tb hot">${firefox(32)}</div>
        <div class="tb p">${icon(32, 32, 0, svg`<path d="M26 22A10 10 0 1 1 27 15.500H9" fill="none" stroke="#38a8e4" stroke-width="5"/><path d="M5 29Q0 28 6 18Q14 4 26 2Q30 2 28 7" fill="none" stroke="#f6c62a" stroke-width="2.600"/>`)}</div>
        <div class="tb word">${icon(30, 30, 0, svg`<path d="M1 1H20V27H1Z" fill="#dbe7f7" stroke="#35589a" stroke-width="2"/><path d="M9 5L29 4V30L9 28Z" fill="#fff" stroke="#8aa0c4"/><path d="M10 8L12 17L14 11L16 17L18 8" fill="none" stroke="#2a4f9e" stroke-width="2"/><path d="M20 10H26M20 14H26M11 20H26M11 24H26" stroke="#2a4f9e" stroke-width="2"/>`)}</div>
        <div class="stack"></div><div class="stack"></div>
        <div class="tb after">${icon(34, 34, 0, svg`<ellipse cx="17" cy="17" rx="15" ry="16" fill="#dfe2e8" stroke="#6c7686"/><path d="M1 11Q9 6 17 7Q26 5 33 11V19Q26 14 19 15Q11 15 5 23Q1 19 1 11Z" fill="#1673cf" stroke="#243b5c"/><path d="M1 12Q6 16 5 23Q1 20 1 12Z" fill="#24344a"/>`)}</div>
        ${t("RU", 16, 1178, "ru")}
        ${icon(9, 6, 15, svg`<path d="M4.500 .5L8.500 5.500H.5Z" fill="#fff" stroke="#44566b" stroke-width=".6"/>`)}
        ${icon(17, 16, 12, svg`<path d="M4.500 4.500H15.500V12H4.500Z" fill="#5e7694" stroke="#fff" stroke-width="1.600"/><path d="M7 15H13M10 12V15M1 1V5H5V1M3 5V12H5" fill="none" stroke="#fff" stroke-width="1.500"/>`)}
        ${icon(17, 16, 7, svg`<path d="M1 5H3L7 1V15L3 11H1Z" fill="#fff"/><path d="M9.500 5Q11.500 8 9.500 11M12 3.500Q14.500 8 12 12.500M14 2Q17.500 8 14 14" fill="none" stroke="#fff"/>`)}
        <div class="clock seg">${t("10:28", 27)}${t("02.02.2017", 53)}</div>
        <div class="desk"></div>
      </div>`;
  }
}
